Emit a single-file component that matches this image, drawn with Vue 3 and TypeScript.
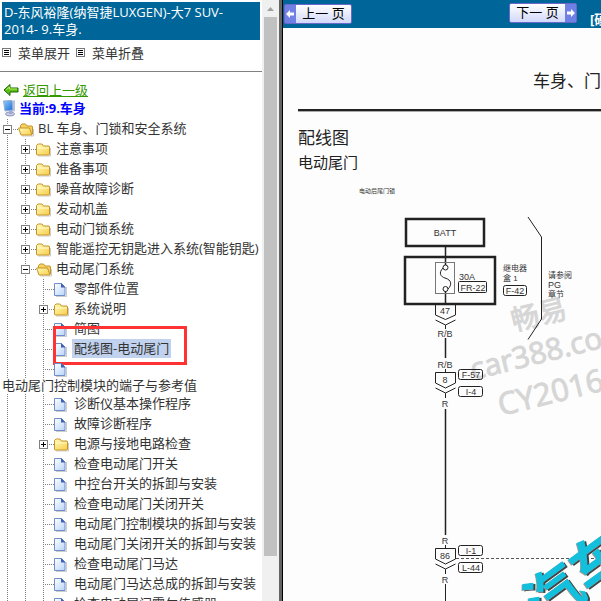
<script setup lang="ts">
interface TreeItem {
  label: string
  kind: 'open' | 'folder' | 'page'
  depth: number
  toggle?: 'plus' | 'minus'
  selected?: boolean
  wrapped?: boolean
}

const items: TreeItem[] = [
  { label: 'BL 车身、门锁和安全系统', kind: 'open', depth: 0, toggle: 'minus' },
  { label: '注意事项', kind: 'folder', depth: 1, toggle: 'plus' },
  { label: '准备事项', kind: 'folder', depth: 1, toggle: 'plus' },
  { label: '噪音故障诊断', kind: 'folder', depth: 1, toggle: 'plus' },
  { label: '发动机盖', kind: 'folder', depth: 1, toggle: 'plus' },
  { label: '电动门锁系统', kind: 'folder', depth: 1, toggle: 'plus' },
  { label: '智能遥控无钥匙进入系统(智能钥匙)', kind: 'folder', depth: 1, toggle: 'plus' },
  { label: '电动尾门系统', kind: 'open', depth: 1, toggle: 'minus' },
  { label: '零部件位置', kind: 'page', depth: 2 },
  { label: '系统说明', kind: 'folder', depth: 2, toggle: 'plus' },
  { label: '简图', kind: 'page', depth: 2 },
  { label: '配线图-电动尾门', kind: 'page', depth: 2, selected: true },
  { label: '电动尾门控制模块的端子与参考值', kind: 'page', depth: 2, wrapped: true },
  { label: '诊断仪基本操作程序', kind: 'page', depth: 2 },
  { label: '故障诊断程序', kind: 'page', depth: 2 },
  { label: '电源与接地电路检查', kind: 'folder', depth: 2, toggle: 'plus' },
  { label: '检查电动尾门开关', kind: 'page', depth: 2 },
  { label: '中控台开关的拆卸与安装', kind: 'page', depth: 2 },
  { label: '检查电动尾门关闭开关', kind: 'page', depth: 2 },
  { label: '电动尾门控制模块的拆卸与安装', kind: 'page', depth: 2 },
  { label: '电动尾门关闭开关的拆卸与安装', kind: 'page', depth: 2 },
  { label: '检查电动尾门马达', kind: 'page', depth: 2 },
  { label: '电动尾门马达总成的拆卸与安装', kind: 'page', depth: 2 },
  { label: '检查电动尾门霍尔传感器', kind: 'page', depth: 2 },
]
</script>

<template>
  <div class="frames">
    <aside class="side">
      <div class="side-body">
        <h1 class="title">D-东风裕隆(纳智捷LUXGEN)-大7 SUV-<br>2014- 9.车身.</h1>
        <div class="menu">
          <button v-for="name in ['菜单展开', '菜单折叠']" :key="name" type="button" class="menu-btn">
            <svg width="9" height="9" viewBox="0 0 9 9" shape-rendering="crispEdges">
              <rect x="0.5" y="0.5" width="8" height="8" fill="#fff" stroke="#777" />
              <path d="M2 2.5h5M2 4.5h5M2 6.5h5" stroke="#000" />
            </svg>
            {{ name }}
          </button>
        </div>
        <div class="rule"></div>
        <a class="back" href="#up">
          <svg width="16" height="16" viewBox="0 0 16 16">
            <path d="M1 8 7 2.5V6h8v4H7v3.500z" fill="#5cbf12" stroke="#1d6608" stroke-linejoin="round" />
            <path d="M3.500 7.500 6.500 5v2h7.500" fill="none" stroke="#b9ef69" />
          </svg>
          <span>返回上一级</span>
        </a>
        <div class="current">
          <svg width="16" height="18" viewBox="0 0 16 18">
            <defs>
              <linearGradient id="screen" x1="0" y1="0" x2="1" y2="1">
                <stop offset="0" stop-color="#8fd0ff" /><stop offset="1" stop-color="#1769d2" />
              </linearGradient>
            </defs>
            <path d="M9 2l3-1v11l-3 1z" fill="#b8c4df" />
            <path d="M.5 2l8.500-.5.8 9.500L2 12z" fill="url(#screen)" stroke="#93a9d4" />
            <ellipse cx="7" cy="15" rx="4.500" ry="2" fill="#c8cde3" stroke="#8e96bd" />
            <path d="M6 12l3-.5V15H6z" fill="#9da9cf" />
          </svg>
          <span>当前:9.车身</span>
        </div>
        <ul class="tree">
          <li v-for="(item, i) in items" :key="i">
            <div class="row">
              <span v-for="n in item.depth" :key="n" class="guide"></span>
              <span class="joint">
                <button v-if="item.toggle" type="button" class="toggle" :aria-label="item.label">
                  <svg width="9" height="9" viewBox="0 0 9 9" shape-rendering="crispEdges">
                    <rect x="0.5" y="0.5" width="8" height="8" fill="#fff" stroke="#808080" />
                    <path :d="item.toggle === 'plus' ? 'M2 4.5h5M4.5 2v5' : 'M2 4.5h5'" stroke="#000" />
                  </svg>
                </button>
              </span>
              <svg class="icon" width="18" height="18" viewBox="0 0 18 18">
                <defs>
                  <linearGradient id="gold" x1="0" y1="0" x2="1" y2="1">
                    <stop offset="0" stop-color="#fffbb8" /><stop offset="1" stop-color="#f7cd4c" />
                  </linearGradient>
                  <linearGradient id="paper" x1="0" y1="0" x2="1" y2="1">
                    <stop offset="0" stop-color="#fff" /><stop offset="1" stop-color="#b9d4fa" />
                  </linearGradient>
                </defs>
                <template v-if="item.kind === 'folder'">
                  <path d="M2 16h12.500V8" fill="none" stroke="#aaa" opacity=".6" />
                  <path d="M.5 5.500 2 4h4l1.500 2h5.500l.5 1v7.500l-.5.5H1l-.5-.5z" fill="url(#gold)" stroke="#c4952a" />
                  <path d="M1.500 8h11.500" stroke="#fffbd0" />
                </template>
                <template v-else-if="item.kind === 'open'">
                  <path d="M4 16h11.500V9" fill="none" stroke="#aaa" opacity=".6" />
                  <path d="M2.500 13V5.500L4 4h3.500l1.500 2h5l.5 1v7z" fill="#f8d160" stroke="#c4952a" />
                  <path d="M.5 8h11l2.500 7H3z" fill="url(#gold)" stroke="#c4952a" stroke-linejoin="round" />
                </template>
                <template v-else>
                  <path d="M2 16.500h10.500V7" fill="none" stroke="#999" opacity=".5" />
                  <path d="M.5 3.500h7L11 7v8.500H.5z" fill="url(#paper)" stroke="#6f8ccb" />
                  <path d="M7 3v4.500h4.500z" fill="#3f62b0" />
                </template>
              </svg>
              <a v-if="!item.wrapped" href="#doc" class="label" :class="{ selected: item.selected }">{{ item.label }}</a>
              <span v-if="item.selected" class="marker"></span>
            </div>
            <a v-if="item.wrapped" href="#doc" class="wrapped">{{ item.label }}</a>
          </li>
        </ul>
      </div>
      <div class="scroll">
        <svg width="17" height="17" viewBox="0 0 17 17"><path d="M5 11 8.500 7 12 11z" fill="#a0a0a0" /></svg>
        <div class="thumb"></div>
      </div>
    </aside>

    <main class="main">
      <header class="bar">
        <button type="button" class="page-btn prev">
          <span class="arrow"><svg width="9" height="10" viewBox="0 0 9 10"><path d="M0 5l4-4v2.500h4v3H4V9z" fill="#fff" /></svg></span>
          <span class="page-text">上一 页</span>
        </button>
        <button type="button" class="page-btn next">
          <span class="page-text">下一 页</span>
          <span class="arrow"><svg width="9" height="10" viewBox="0 0 9 10"><path d="M9 5 5 1v2.500H1v3h4V9z" fill="#fff" /></svg></span>
        </button>
        <a href="#fav" class="extra">[硬</a>
      </header>
      <section class="doc">
        <h2 class="doc-title">车身、门</h2>
        <div class="doc-rule"></div>
        <h3 class="h-main">配线图</h3>
        <h4 class="h-sub">电动尾门</h4>
        <svg class="diagram" width="460" height="421" viewBox="283 180 460 421">
          <g class="mark">
            <text x="514" y="331" font-size="28" transform="rotate(-14 514 331)">畅易</text>
            <text x="473" y="380" font-size="30" transform="rotate(-14 473 380)">car388.co</text>
            <text x="501" y="416" font-size="31" transform="rotate(-14 501 416)">CY2016</text>
          </g>
          <text x="359" y="193" font-size="6">电动后尾门锁</text>
          <g fill="none" stroke="#222">
            <rect x="406" y="219" width="78" height="27" stroke-width="2.500" />
            <rect x="405" y="257" width="90" height="47" stroke-width="2.500" />
            <path d="M445.500 247v18M445.500 291v14" stroke-width="1.500" />
            <rect x="435.500" y="262.500" width="19" height="31" stroke="#777" />
            <circle cx="445.500" cy="267.500" r="2.500" />
            <circle cx="445.500" cy="289" r="2.500" />
            <path d="M443 268c-5 5-2 9 2 10 7 2 7 7 3 11" />
            <rect x="458.500" y="281.500" width="28" height="11" rx="1" />
            <rect x="503.500" y="285.500" width="23" height="10" rx="2" />
            <path d="M435.500 305v10l10 4.500 10-4.500v-10M435.500 320l10 5 10-5M445.500 325v4" />
            <path d="M445.500 338v20M445.500 409v126" stroke-width="1.500" />
            <path d="M435.500 372.500h20V383l-10 5-10-5zM435.500 388l10 5 10-5M445.500 369v3M445.500 393v5" />
            <rect x="458.500" y="369.500" width="24" height="10" rx="2" />
            <rect x="458.500" y="386.500" width="24" height="10" rx="2" />
            <path d="M435.500 548.500h20V559l-10 5-10-5zM435.500 564l10 5 10-5M445.500 545v3M445.500 569v5M445.500 584v18" />
            <rect x="458.500" y="545.500" width="24" height="10" rx="2" />
            <rect x="458.500" y="562.500" width="24" height="10" rx="2" />
            <path d="M456 558.500h287" stroke-dasharray="3 2" stroke="#555" />
            <path d="M528 217l13.500 20v82L528 339.500" />
          </g>
          <g text-anchor="middle" font-size="9">
            <text x="445" y="236">BATT</text>
            <text x="473" y="291">FR-22</text>
            <text x="515" y="294">F-42</text>
            <text x="445" y="314">47</text>
            <text x="445" y="337">R/B</text>
            <text x="445" y="368">R/B</text>
            <text x="445" y="383">8</text>
            <text x="471" y="378">F-57</text>
            <text x="471" y="395">I-4</text>
            <text x="445" y="407">R</text>
            <text x="445" y="544">R</text>
            <text x="445" y="559">86</text>
            <text x="471" y="554">I-1</text>
            <text x="471" y="571">L-44</text>
            <text x="445" y="583">R</text>
          </g>
          <text x="459" y="280" font-size="9">30A</text>
          <text x="503" y="271">继电器</text>
          <text x="503" y="281">盒 1</text>
          <text x="548" y="278">请参阅</text>
          <text x="548" y="288" font-size="9">PG</text>
          <text x="548" y="297">章节</text>
          <g transform="rotate(-36 543 627)" font-size="56" font-weight="700">
            <text class="brand-shadow" x="544" y="629">汽车</text>
            <text class="brand-edge" x="542" y="627">汽车</text>
            <text class="brand" x="543" y="627">汽车</text>
          </g>
        </svg>
      </section>
    </main>
  </div>
</template>

<style>
body {
  margin: 0;
  overflow: hidden;
}
</style>

<style scoped>
.frames {
  display: flex;
  height: 100vh;
  overflow: hidden;
  background: #fff;
  font-family: "Open Sans", "Noto Sans CJK SC", sans-serif;
  font-size: 13px;
  color: #333;
}
button {
  padding: 0;
  border: 0;
  background: none;
  font: inherit;
  color: inherit;
}
a {
  color: inherit;
  text-decoration: none;
}
.side {
  display: flex;
  flex: 0 0 279px;
  border-right: 3px solid #646464;
  box-shadow: 1px 0 #000;
  z-index: 1;
}
.side-body {
  flex: 1;
  min-width: 0;
  overflow: hidden;
}
.title {
  margin: 2px 2px 0;
  padding: 2px;
  height: 34px;
  background: #069;
  color: #fff;
  font-size: 13px;
  font-weight: 400;
  line-height: 17px;
  white-space: nowrap;
}
.menu {
  display: flex;
  gap: 6px;
  height: 24px;
  padding-left: 2px;
  align-items: center;
}
.menu-btn {
  display: flex;
  align-items: center;
  gap: 7px;
}
.rule {
  height: 1px;
  margin-top: 7px;
  background: #808080;
}
.back,
.current {
  display: flex;
  align-items: center;
  gap: 4px;
  height: 18px;
  padding-left: 3px;
  line-height: 18px;
}
.back {
  margin-top: 9px;
  color: #390;
}
.back span {
  text-decoration: underline;
}
.current {
  gap: 0;
  color: #00f;
  font-weight: 700;
}
.tree {
  margin: 0;
  padding: 2px 0 0;
  list-style: none;
}
.row {
  position: relative;
  display: flex;
  align-items: center;
  height: 20px;
  white-space: nowrap;
}
.guide,
.joint {
  flex: 0 0 18px;
  height: 20px;
  background: repeating-linear-gradient(#808080 0 1px, transparent 1px 2px) 7px 0 / 1px 20px no-repeat;
}
.joint {
  display: flex;
  align-items: center;
  padding-left: 3px;
  box-sizing: border-box;
  background:
    repeating-linear-gradient(#808080 0 1px, transparent 1px 2px) 7px 0 / 1px 20px no-repeat,
    repeating-linear-gradient(90deg, #808080 0 1px, transparent 1px 2px) 7px 10px / 11px 1px no-repeat;
}
.toggle,
.toggle svg {
  display: block;
}
.icon {
  flex: none;
}
.label {
  padding: 0 2px;
  line-height: 19px;
  margin-bottom: 1px;
}
.selected {
  background: #c1d2ee;
}
.wrapped {
  display: block;
  height: 15px;
  padding-left: 2px;
  line-height: 13px;
}
.marker {
  position: absolute;
  left: 53px;
  top: -13px;
  width: 128px;
  height: 33px;
  border: 3px solid #f33;
}
.scroll {
  display: flex;
  flex-direction: column;
  flex: 0 0 17px;
  background: #f0f0f0;
}
.thumb {
  width: 13px;
  height: 90%;
  max-height: 539px;
  margin-left: 2px;
  background: #c1c1c1;
}
.main {
  flex: 1;
  min-width: 0;
  overflow: hidden;
  background: #fdfdfd;
}
.bar {
  display: flex;
  align-items: flex-start;
  height: 28px;
  padding-left: 2px;
  background: #069;
  white-space: nowrap;
}
.page-btn {
  display: flex;
  flex: none;
  height: 20px;
  width: 68px;
  border: 1px solid #6a68c8;
  border-radius: 2px;
  box-sizing: border-box;
  background: linear-gradient(#fff, #d2d8fa);
  color: #000;
  line-height: 17px;
}
.prev {
  margin-top: 4px;
}
.next {
  margin: 3px 0 0 157px;
}
.page-text {
  flex: 1;
  text-align: center;
}
.arrow {
  display: flex;
  align-items: center;
  justify-content: center;
  width: 11px;
  background: #7080e4;
}
.extra {
  margin: 10px 0 0 13px;
  color: #fff;
  font-weight: 700;
  line-height: 18px;
}
.doc {
  color: #222;
  white-space: nowrap;
}
.doc-title,
.h-main,
.h-sub {
  margin: 0;
  font-weight: 400;
}
.doc-title {
  padding: 40px 0 0 251px;
  font-size: 17px;
  line-height: 26px;
}
.doc-rule {
  height: 2px;
  margin: 15px 0 0 16px;
  background: #222;
  border-bottom: 1px solid #aaa;
}
.h-main {
  padding: 14px 0 0 16px;
  font-size: 17px;
  line-height: 24px;
}
.h-sub {
  padding: 1px 0 0 16px;
  font-size: 15px;
  line-height: 22px;
}
.diagram {
  display: block;
  margin: 7px 0 0 1px;
  font-family: "Liberation Sans", "Noto Sans CJK SC", sans-serif;
  font-size: 8px;
  fill: #333;
}
.mark {
  font-family: "Open Sans", "Noto Sans CJK SC", sans-serif;
  fill: #d6d6d6;
  stroke: #d6d6d6;
}
.brand {
  fill: #12bfdc;
}
.brand-edge {
  fill: #a39a94;
}
.brand-shadow {
  fill: #444;
}
</style>
